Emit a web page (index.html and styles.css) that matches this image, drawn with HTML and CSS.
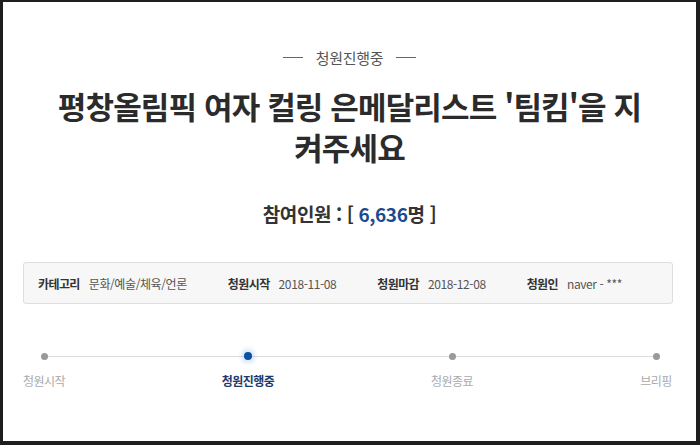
FILE: index.html
```html
<!DOCTYPE html>
<html lang="ko">
<head>
<meta charset="utf-8">
<link rel="stylesheet" href="styles.css">
</head>
<body>
<div class="frame">
  <div class="status"><span class="dash"></span><span class="status-text">청원진행중</span><span class="dash"></span></div>
  <h1 class="title">평창올림픽 여자 컬링 은메달리스트 '팀킴'을 지<br>켜주세요</h1>
  <div class="count">참여인원 : [ <span class="num">6,636</span>명 ]</div>
  <div class="info">
    <div class="item"><span class="label">카테고리</span><span class="value">문화/예술/체육/언론</span></div>
    <div class="item"><span class="label">청원시작</span><span class="value">2018-11-08</span></div>
    <div class="item"><span class="label">청원마감</span><span class="value">2018-12-08</span></div>
    <div class="item"><span class="label">청원인</span><span class="value">naver - ***</span></div>
  </div>
  <div class="track">
    <div class="step"><span class="dot"></span><span class="step-label">청원시작</span></div>
    <div class="step active"><span class="dot"></span><span class="step-label">청원진행중</span></div>
    <div class="step"><span class="dot"></span><span class="step-label">청원종료</span></div>
    <div class="step"><span class="dot"></span><span class="step-label">브리핑</span></div>
  </div>
</div>
</body>
</html>
```
FILE: styles.css
```css
html, body {
  margin: 0;
  padding: 0;
  background: #fff;
}
body {
  font-family: "Noto Sans CJK KR", "Noto Sans", sans-serif;
  color: #333;
}
.frame {
  box-sizing: border-box;
  width: 700px;
  height: 445px;
  border-style: solid;
  border-color: #1e1e1e;
  border-width: 2px 4px 4px 3px;
  padding: 45px 20px 0 20px;
  display: flex;
  flex-direction: column;
  align-items: stretch;
}
.status {
  display: flex;
  justify-content: center;
  align-items: center;
  gap: 13px;
  height: 20px;
  font-size: 15px;
  color: #555;
  letter-spacing: -0.3px;
}
.dash {
  width: 20px;
  height: 1px;
  background: #666;
}
.title {
  margin: 18px 0 0 0;
  text-align: center;
  font-size: 31px;
  line-height: 41px;
  font-weight: 700;
  color: #2b2b2b;
  letter-spacing: -0.85px;
}
.count {
  margin-top: 34px;
  text-align: center;
  font-size: 19px;
  line-height: 26px;
  font-weight: 700;
  color: #333;
  letter-spacing: -0.4px;
}
.num {
  color: #1c4a90;
}
.info {
  margin: 35px 3px 0 0;
  height: 42px;
  box-sizing: border-box;
  background: #f7f7f7;
  border: 1px solid #dedede;
  border-radius: 3px;
  display: flex;
  align-items: center;
  gap: 41px;
  padding-left: 14px;
  font-size: 12px;
}
.item {
  display: flex;
  align-items: center;
  gap: 9px;
}
.label {
  font-weight: 700;
  color: #333;
  letter-spacing: -0.6px;
}
.value {
  color: #555;
  letter-spacing: -0.4px;
}
.track {
  margin: 48px -1px 0 0;
  position: relative;
  display: flex;
  justify-content: space-between;
}
.track::before {
  content: "";
  position: absolute;
  left: 21px;
  right: 21px;
  top: 4px;
  height: 1px;
  background: #dcdcdc;
}
.step {
  width: 42px;
  display: flex;
  flex-direction: column;
  align-items: center;
  position: relative;
}
.dot {
  width: 7px;
  height: 7px;
  margin-top: 0.5px;
  border-radius: 50%;
  background: #9a9a9a;
}
.step.active .dot {
  width: 8px;
  height: 8px;
  margin-top: 0;
  background: #0b4fa3;
  box-shadow: 0 0 4px 3px rgba(90, 150, 230, 0.25);
}
.step-label {
  margin-top: 13px;
  white-space: nowrap;
  font-size: 12px;
  line-height: 16px;
  color: #aaa;
  letter-spacing: -0.5px;
}
.step.active .step-label {
  font-weight: 700;
  color: #1d3a6c;
}
```
